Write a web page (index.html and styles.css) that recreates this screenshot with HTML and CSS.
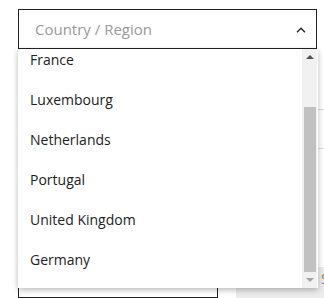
FILE: index.html
```html
<!DOCTYPE html>
<html lang="en">
<head>
    <meta charset="UTF-8">
    <meta name="viewport" content="width=device-width, initial-scale=1.0">
    <title>Address</title>
    <link rel="stylesheet" href="styles.css">
</head>
<body>
    <div class="form">
        <div class="select-field">
            <div class="select-box">
                <span class="placeholder">Country / Region</span>
                <svg class="chevron" width="10" height="6" viewBox="0 0 10 6">
                    <path d="M1 5.2 L5 1.2 L9 5.2" fill="none" stroke="#222" stroke-width="1.3"/>
                </svg>
            </div>
            <div class="dropdown">
                <div class="list-view">
                    <ul class="country-list">
                        <li>France</li>
                        <li>Luxembourg</li>
                        <li>Netherlands</li>
                        <li>Portugal</li>
                        <li>United Kingdom</li>
                        <li>Germany</li>
                    </ul>
                </div>
                <div class="scrollbar">
                    <div class="scroll-btn"><span class="arrow-up"></span></div>
                    <div class="scroll-track"><div class="scroll-thumb"></div></div>
                    <div class="scroll-btn"><span class="arrow-down"></span></div>
                </div>
            </div>
        </div>

        <div class="rows">
            <div class="row"></div>
            <div class="row"></div>
        </div>

        <div class="actions">
            <div class="input-box"></div>
            <button class="btn-save">S</button>
        </div>
    </div>
</body>
</html>
```

FILE: styles.css
```css
body {
    font-family: "Open Sans", Arial, sans-serif;
    background-color: #fff;
    color: #222;
    margin: 0;
    padding: 0;
    height: 298px;
    overflow: hidden;
}
.form {
    padding: 9px 0 0 18px;
}
.select-field {
    position: relative;
    width: 299px;
    z-index: 2;
}
.select-box {
    height: 38px;
    border: 1px solid #222;
    display: flex;
    align-items: center;
    justify-content: space-between;
    padding: 0 10px 0 16px;
}
.placeholder {
    font-size: 15px;
    color: #999;
}
.chevron {
    margin-top: 1px;
}

/* geöffnete Liste */
.dropdown {
    position: absolute;
    top: 100%;
    left: 0;
    width: 300px;
    height: 239px;
    display: flex;
    background-color: #fff;
    box-shadow: 0 2px 6px rgba(0, 0, 0, 0.28);
}
.list-view {
    flex: 1;
    overflow: hidden;
}
.country-list {
    list-style: none;
    margin: -9px 0 0;
    padding: 0;
}
.country-list li {
    height: 40px;
    line-height: 40px;
    padding-left: 12px;
    font-size: 14px;
}
.scrollbar {
    width: 15px;
    margin-right: 1px;
    display: flex;
    flex-direction: column;
    background-color: #f1f1f1;
}
.scroll-btn {
    height: 16px;
    display: flex;
    align-items: center;
    justify-content: center;
}
.arrow-up,
.arrow-down {
    width: 0;
    height: 0;
    border-left: 4px solid transparent;
    border-right: 4px solid transparent;
}
.arrow-up {
    border-bottom: 4px solid #505050;
}
.arrow-down {
    border-top: 4px solid #a3a3a3;
}
.scroll-track {
    flex: 1;
    display: flex;
    flex-direction: column;
    justify-content: flex-end;
    padding: 0 1px 0 2px;
}
.scroll-thumb {
    height: 165px;
    background-color: #c1c1c1;
}

/* Inhalt hinter der Liste */
.rows {
    margin-top: 22px;
}
.row {
    height: 38px;
    border-bottom: 1px solid #ddd;
}
.actions {
    display: flex;
    align-items: flex-start;
    gap: 18px;
    margin-top: 109px;
}
.input-box {
    flex-shrink: 0;
    width: 198px;
    height: 38px;
    border: 1px solid #222;
}
.btn-save {
    flex: 1;
    height: 40px;
    margin-top: 9px;
    border: none;
    background-color: #ececec;
    color: #8a7d70;
    font-family: inherit;
    font-size: 14px;
    line-height: 20px;
    text-align: left;
    padding: 2px 0 0 85px;
    display: flex;
}
```
